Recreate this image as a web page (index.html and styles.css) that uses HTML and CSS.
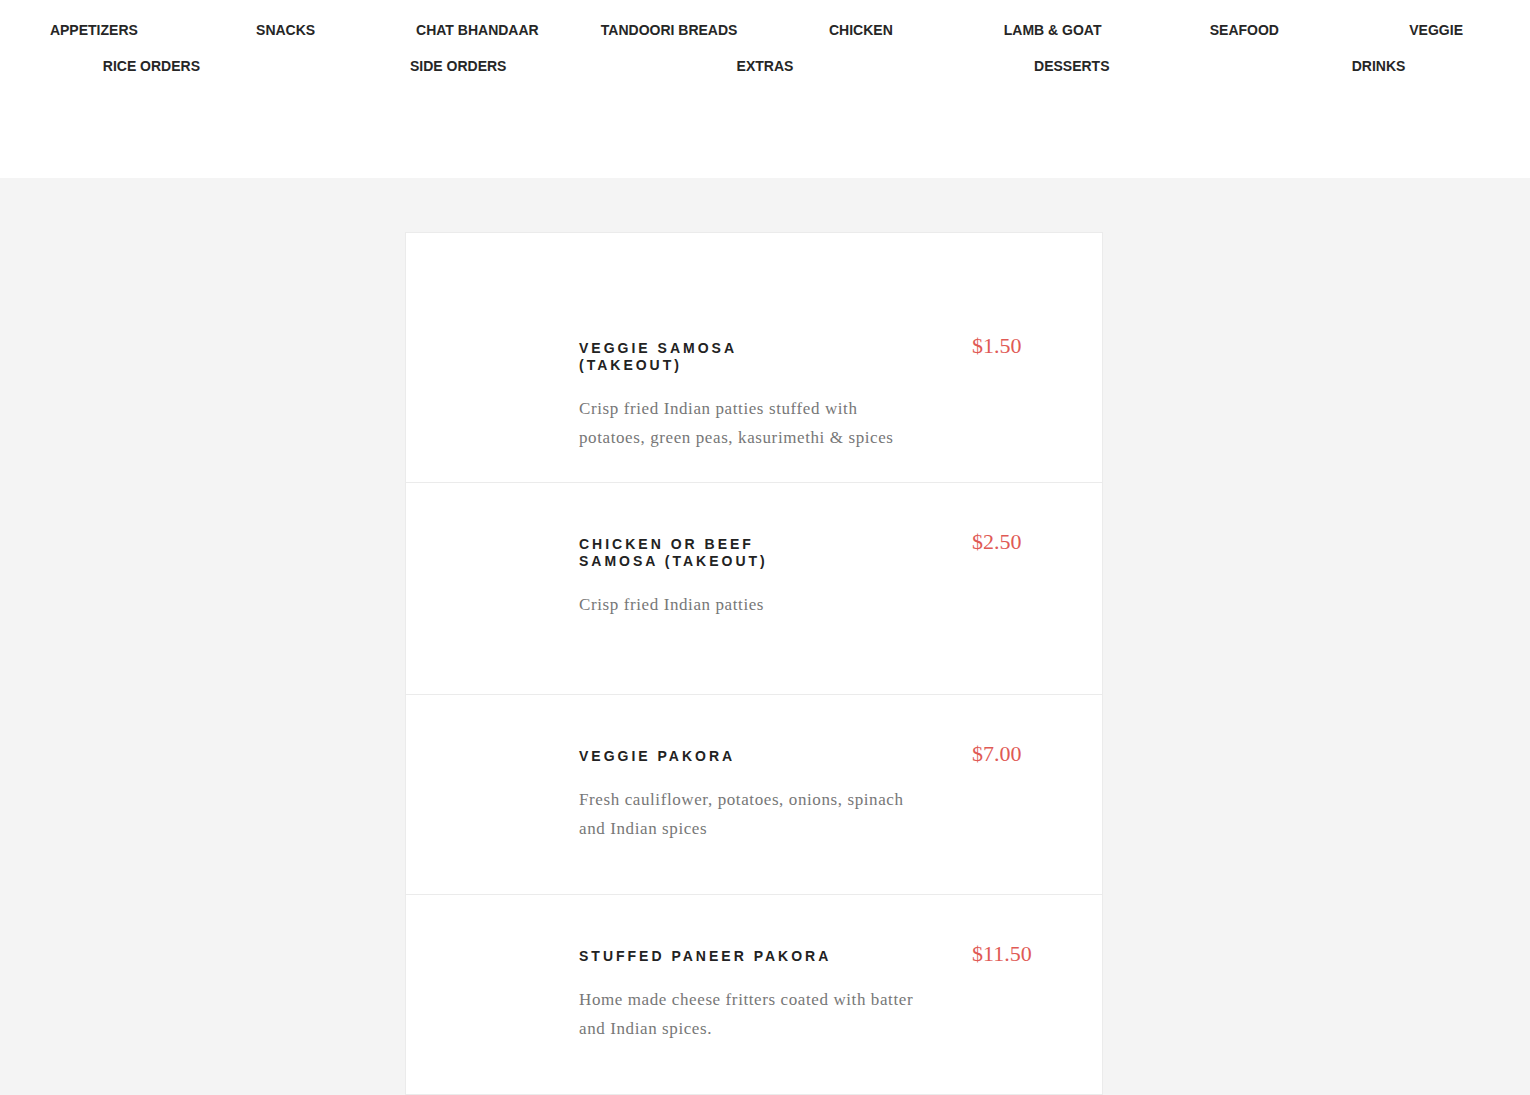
FILE: index.html
```html
<!DOCTYPE html>
<html lang="en">
<head>
<meta charset="utf-8">
<title>Menu</title>
<link rel="stylesheet" href="styles.css">
</head>
<body>
<header class="header">
  <nav class="nav nav--eight">
    <a class="nav__link" href="#">APPETIZERS</a>
    <a class="nav__link" href="#">SNACKS</a>
    <a class="nav__link" href="#">CHAT BHANDAAR</a>
    <a class="nav__link" href="#">TANDOORI BREADS</a>
    <a class="nav__link" href="#">CHICKEN</a>
    <a class="nav__link" href="#">LAMB &amp; GOAT</a>
    <a class="nav__link" href="#">SEAFOOD</a>
    <a class="nav__link" href="#">VEGGIE</a>
  </nav>
  <nav class="nav nav--five">
    <a class="nav__link" href="#">RICE ORDERS</a>
    <a class="nav__link" href="#">SIDE ORDERS</a>
    <a class="nav__link" href="#">EXTRAS</a>
    <a class="nav__link" href="#">DESSERTS</a>
    <a class="nav__link" href="#">DRINKS</a>
  </nav>
</header>
<main class="page">
  <section class="menu">
    <article class="item item--first">
      <div class="item__body">
        <h3 class="item__title">VEGGIE SAMOSA (TAKEOUT)</h3>
        <p class="item__desc">Crisp fried Indian patties stuffed with potatoes, green peas, kasurimethi &amp; spices</p>
      </div>
      <div class="item__price">$1.50</div>
    </article>
    <article class="item item--tall">
      <div class="item__body">
        <h3 class="item__title">CHICKEN OR BEEF SAMOSA (TAKEOUT)</h3>
        <p class="item__desc">Crisp fried Indian patties</p>
      </div>
      <div class="item__price">$2.50</div>
    </article>
    <article class="item">
      <div class="item__body">
        <h3 class="item__title">VEGGIE PAKORA</h3>
        <p class="item__desc">Fresh cauliflower, potatoes, onions, spinach and Indian spices</p>
      </div>
      <div class="item__price">$7.00</div>
    </article>
    <article class="item">
      <div class="item__body">
        <h3 class="item__title">STUFFED PANEER PAKORA</h3>
        <p class="item__desc">Home made cheese fritters coated with batter and Indian spices.</p>
      </div>
      <div class="item__price">$11.50</div>
    </article>
  </section>
</main>
</body>
</html>
```

FILE: styles.css
```css
* { box-sizing: border-box; }
html, body { margin: 0; padding: 0; }
body {
  background: #f4f4f4;
  font-family: "Liberation Sans", Arial, sans-serif;
  overflow-x: hidden;
}
.header {
  background: #fff;
  padding: 12px 0 94px;
}
.nav {
  display: grid;
  height: 36px;
  align-items: center;
  margin: 0 -2px;
}
.nav--eight { grid-template-columns: repeat(8, 1fr); }
.nav--five { grid-template-columns: repeat(5, 1fr); }
.nav__link {
  text-align: center;
  font-weight: 700;
  font-size: 14px;
  color: #262626;
  text-decoration: none;
  white-space: nowrap;
}
.page {
  padding: 54px 0 0;
}
.menu {
  width: 698px;
  margin-left: calc(50% - 360px);
  background: #fff;
  border: 1px solid #ebebeb;
  border-bottom: 0;
  padding-top: 54px;
}
.item {
  display: grid;
  grid-template-columns: 340px auto;
  column-gap: 53px;
  align-items: start;
  padding: 53px 0 0 173px;
  min-height: 200px;
  border-bottom: 1px solid #ebebeb;
}
.item--first { min-height: 196px; }
.item--tall { min-height: 212px; }
.item__title {
  margin: 0;
  max-width: 260px;
  font-size: 14px;
  line-height: 17px;
  font-weight: 700;
  letter-spacing: 3px;
  color: #222;
}
.item__desc {
  margin: 20px 0 0;
  font-family: "Liberation Serif", "Times New Roman", serif;
  font-size: 17px;
  line-height: 29px;
  letter-spacing: 0.6px;
  color: #777;
}
.item__price {
  margin-top: -5px;
  font-family: "Liberation Serif", "Times New Roman", serif;
  font-size: 22px;
  line-height: 22px;
  color: #e05a55;
}
```
